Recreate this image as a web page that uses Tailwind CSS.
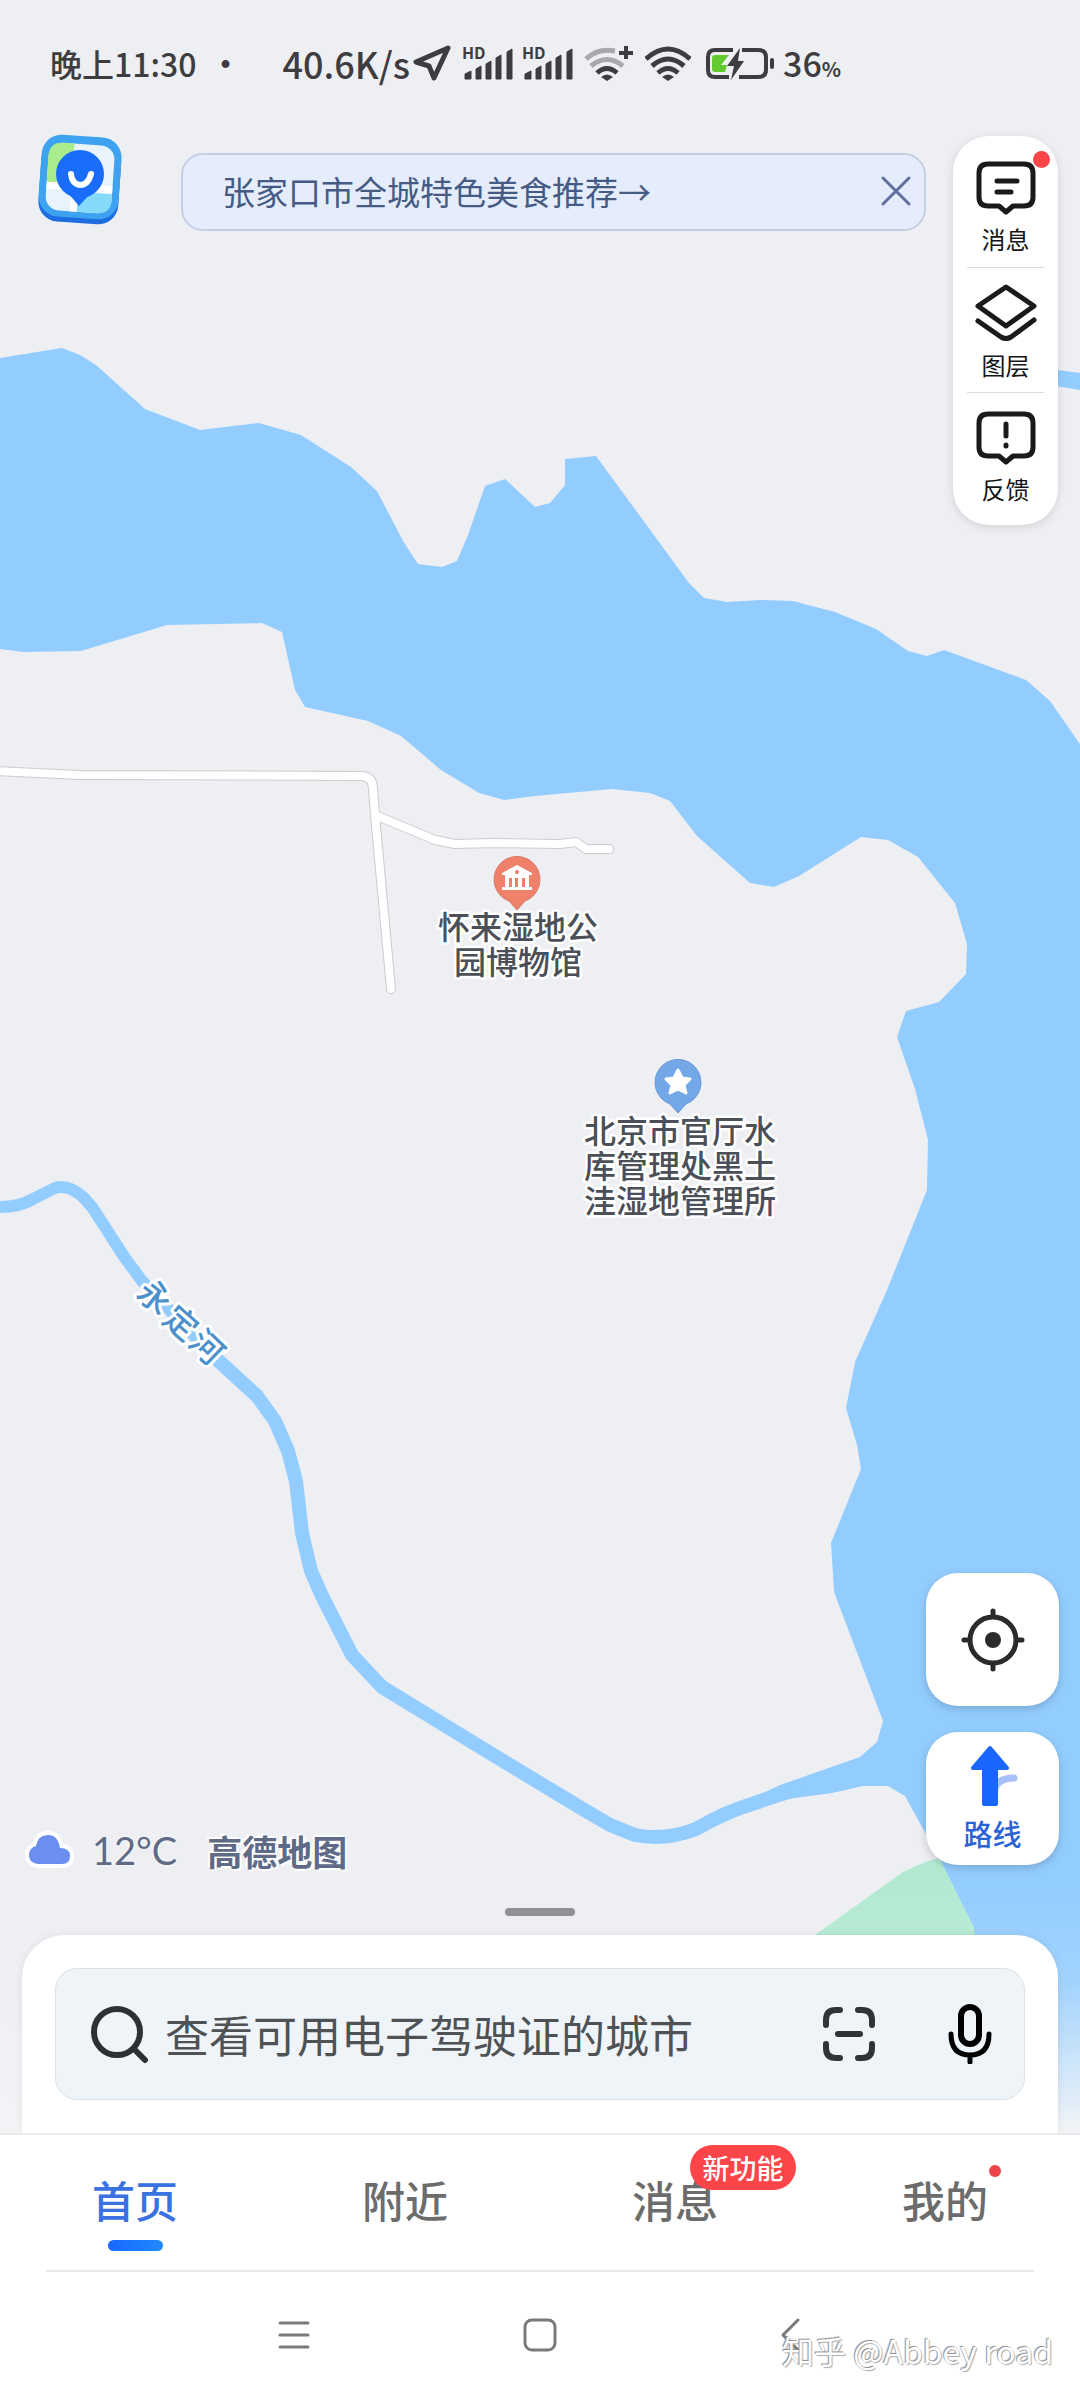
<!DOCTYPE html>
<html lang="zh-CN">
<head>
  <meta charset="UTF-8">
  <meta name="viewport" content="width=device-width, initial-scale=1.0">
  <title>高德地图</title>
  <script src="https://cdn.jsdelivr.net/npm/@tailwindcss/browser@4"></script>
</head>
<body class="flex min-h-screen flex-col bg-white font-['Noto_Sans_CJK_SC',sans-serif]">
  <main class="relative flex flex-1 flex-col overflow-hidden bg-[#eeeff3]">

    <!-- Map canvas -->
    <svg class="absolute inset-0 h-full w-full" viewBox="0 0 1080 2133" preserveAspectRatio="xMidYMin slice" role="img" aria-label="地图">
      <defs>
        <linearGradient id="fade" x1="0" y1="0" x2="0" y2="1">
          <stop offset="0" stop-color="#f3f4f6" stop-opacity="0"></stop>
          <stop offset="0.4" stop-color="#f3f4f6" stop-opacity="0.15"></stop>
          <stop offset="1" stop-color="#f3f4f6"></stop>
        </linearGradient>
      </defs>

      <!-- Reservoir -->
      <path fill="#93cdff" d="M0 358L62 348L80 355L96 365L145 409L200 430L259 423L301 435L351 467L377 491L403 541L418 564L442 567L457 561L468 535L485 486L505 479L535 507L550 503L565 485V459L596 456L689 583L704 598L727 602L760 600L793 601L835 612L876 629L908 651L927 656L944 650L1026 680L1050 701L1080 744V2133H980L974 1928L939 1858L905 1796L888 1786H863L832 1793L780 1800L750 1809V1799L780 1785L860 1757L877 1742L883 1721L834 1592L831 1543L861 1469L857 1445L846 1408L855 1362L887 1290L927 1190L928 1140L915 1089L897 1037L906 1011L939 1002L966 974L967 944L955 903L918 857L888 840L861 837L799 876L774 887L750 883L697 836L670 801L650 793L612 789L535 796L504 800L479 793L441 770L401 736L368 721L305 707L295 690L282 632L262 623L167 625L81 651L24 652L0 649Z"></path>
      <path fill="#93cdff" d="M1050 369L1080 373V390L1050 385Z"></path>
      <path fill="#b2ead1" d="M815 1935L903 1872L925 1862L939 1858L970 1920L974 1928V1940H815Z"></path>

      <!-- River -->
      <path fill="none" stroke="#93cdff" stroke-width="12" stroke-linejoin="round" d="M-5 1207Q18 1208 33 1199L55 1188Q68 1184 83 1197L92 1207L125 1258L142 1281L217 1360"></path>
      <path fill="none" stroke="#93cdff" stroke-width="14" stroke-linejoin="round" stroke-linecap="round" d="M210 1353L257 1396L275 1421L288 1451L296 1481L302 1533L311 1571L322 1596L352 1655L382 1687L490 1753L581 1808L610 1825L635 1835Q665 1841 696 1829Q725 1812 755 1803L800 1788"></path>

      <!-- Roads -->
      <g fill="none" stroke-linecap="round" stroke-linejoin="round">
        <g stroke="#cbccd0" stroke-width="10">
          <path d="M-8 771L80 775L362 776Q373 777 373 789L375 815L391 989"></path>
          <path d="M375 815L435 840L455 844L495 843L560 844L576 842L586 849H609"></path>
        </g>
        <g stroke="#ffffff" stroke-width="8">
          <path d="M-8 771L80 775L362 776Q373 777 373 789L375 815L391 989"></path>
          <path d="M375 815L435 840L455 844L495 843L560 844L576 842L586 849H609"></path>
        </g>
      </g>

      <!-- Museum marker -->
      <path fill="#ef8069" stroke="#d97a68" stroke-width="1" d="M517 910L509 901A23 23 0 1 1 525 901Z"></path>
      <path fill="#ffffff" d="M517 865L532 873V875H529V887H532V890H502V887H505V875H502V873Z"></path>
      <g fill="#ef8069">
        <circle cx="517" cy="872" r="2"></circle>
        <path d="M509 878h3v9h-3zM515 878h3v9h-3zM522 878h3v9h-3z"></path>
      </g>

      <!-- Office marker -->
      <path fill="#74a7e8" stroke="#6a99d6" stroke-width="1" d="M678 1113L670 1104A23 23 0 1 1 686 1104Z"></path>
      <path fill="#ffffff" stroke="#ffffff" stroke-width="3" stroke-linejoin="round" d="M678 1070L682 1078L690 1079L684 1085L686 1093L678 1089L670 1093L672 1085L666 1079L674 1078Z"></path>

      <g class="text-[32px] font-medium" fill="#4b4f57" stroke="#ffffff" stroke-width="5" stroke-linejoin="round" paint-order="stroke" text-anchor="middle">
        <text x="518" y="939">怀来湿地公</text>
        <text x="518" y="974">园博物馆</text>
        <text x="680" y="1143">北京市官厅水</text>
        <text x="680" y="1178">库管理处黑土</text>
        <text x="680" y="1213">洼湿地管理所</text>
      </g>
      <g class="text-[33px] font-medium" fill="#4b8fcb" stroke="#ffffff" stroke-width="6" stroke-linejoin="round" paint-order="stroke" text-anchor="middle">
        <text transform="translate(155 1297) rotate(38)" y="12">永</text>
        <text transform="translate(181 1323) rotate(41)" y="12">定</text>
        <text transform="translate(207 1347) rotate(44)" y="12">河</text>
      </g>

      <rect x="0" y="1880" width="1080" height="253" fill="url(#fade)"></rect>
    </svg>

    <!-- Status bar -->
    <header class="relative flex h-[130px] items-center pb-1 pl-[50px] text-[34px] leading-none font-medium text-[#3d3d3f]">
      <span class="text-[32px]">晚上11:30</span>
      <span class="w-[86px] pl-3">·</span>
      <span class="text-[36px]">40.6K/s</span>
      <svg class="ml-[2px] h-9 w-10" viewBox="0 0 40 36" fill="none" stroke="currentColor" stroke-width="5" stroke-linejoin="round" aria-hidden="true">
        <path d="M36 3L4 17L17 21L22 33Z"></path>
      </svg>
      <svg class="ml-[10px] h-9 w-[54px] overflow-visible" viewBox="0 0 54 36" fill="currentColor" aria-label="HD 信号">
        <text x="0" y="14" class="text-[16px] font-bold">HD</text>
        <path d="M3 34v-5l6-3v8zM14 34V24l5-3v13zM24 34V19l5-3v18zM34 34V13l5-3v24zM45 34V7l5-3v30z" stroke="currentColor" stroke-linejoin="round"></path>
      </svg>
      <svg class="ml-[6px] h-9 w-[54px] overflow-visible" viewBox="0 0 54 36" fill="currentColor" aria-label="HD 信号">
        <text x="0" y="14" class="text-[16px] font-bold">HD</text>
        <path d="M3 34v-5l6-3v8zM14 34V24l5-3v13zM24 34V19l5-3v18zM34 34V13l5-3v24zM45 34V7l5-3v30z" stroke="currentColor" stroke-linejoin="round"></path>
      </svg>
      <svg class="ml-2 h-9 w-[50px]" viewBox="0 0 50 36" fill="none" stroke="currentColor" stroke-width="5" aria-hidden="true">
        <path stroke="#a9a9ad" d="M2 14Q14 3 31 6M7 21Q23 8 39 21"></path>
        <path d="M13 28Q23 19 33 28"></path>
        <path stroke-width="4" d="M42 1v13M35 8h14"></path>
        <path fill="currentColor" stroke="none" d="M17 32Q23 27 29 32L23 36Z"></path>
      </svg>
      <svg class="ml-[11px] h-9 w-[46px]" viewBox="0 0 46 36" fill="none" stroke="currentColor" stroke-width="5" aria-hidden="true">
        <path d="M1 14Q23 -6 45 14M7 21Q23 7 39 21M13 28Q23 19 33 28"></path>
        <path fill="currentColor" stroke="none" d="M17 32Q23 27 29 32L23 36Z"></path>
      </svg>
      <svg class="ml-[14px] h-9 w-[70px]" viewBox="0 0 70 36" fill="none" aria-hidden="true">
        <path stroke="currentColor" stroke-width="4" d="M28 5H10Q3 5 3 12V25Q3 32 10 32H24M37 5H53Q61 5 61 12V25Q61 32 53 32H34"></path>
        <path fill="#62c92e" d="M10 10H24L16 20H22L20 27H10Q7 27 7 24V13Q7 10 10 10Z"></path>
        <path fill="currentColor" d="M35 3L22 21H29L26 35L39 16H33Z"></path>
        <rect x="65" y="13" width="4" height="11" rx="2" fill="currentColor"></rect>
      </svg>
      <span class="ml-2 flex items-baseline">36<span class="text-[20px] font-bold">%</span></span>
    </header>

    <!-- Promo banner and side tools -->
    <section class="relative flex items-start pr-[22px] pl-9">
      <a href="#" aria-label="高德地图" class="mt-[3px] shrink-0">
        <svg class="h-24 w-[90px]" viewBox="0 0 90 96" aria-hidden="true">
          <g transform="rotate(4 44 46)">
            <rect x="4" y="8" width="80" height="82" rx="20" fill="#1d6de0"></rect>
            <rect x="4" y="3" width="80" height="82" rx="20" fill="#3da2f0"></rect>
            <rect x="11" y="11" width="66" height="68" rx="14" fill="#e9f3fb"></rect>
            <path fill="#a8ec8b" d="M11 52V25Q11 11 25 11H36V20L20 52Z"></path>
            <path fill="#ffffff" d="M11 51H77V58H11ZM36 57H43V79H36Z"></path>
            <path fill="#84daf8" d="M43 59H77V65Q77 79 63 79H43Z"></path>
          </g>
          <circle cx="44" cy="41" r="24" fill="#1a6cfb"></circle>
          <path fill="#1a6cfb" d="M32 60L43 73L54 61Z"></path>
          <path fill="none" stroke="#ffffff" stroke-width="6" stroke-linecap="round" d="M35 41Q36 51 44 52Q52 52 55 41"></path>
        </svg>
      </a>
      <div class="mt-[23px] ml-[55px] flex h-[78px] flex-1 items-center rounded-[22px] border-2 border-[#c3cfe3] bg-[#e5edfc] pr-[6px] pb-[2px] pl-[39px]">
        <a href="#" class="flex-1 text-[33px] leading-none text-[#465b84]">张家口市全城特色美食推荐→</a>
        <button type="button" aria-label="关闭" class="flex size-11 items-center justify-center">
          <svg class="size-8" viewBox="0 0 32 32" fill="none" stroke="#5e6f9c" stroke-width="3" stroke-linecap="round"><path d="M3 3L29 29M29 3L3 29"></path></svg>
        </button>
      </div>
      <nav aria-label="工具" class="mt-[6px] ml-[27px] w-[105px] shrink-0 rounded-[36px] bg-white px-[14px] py-[7px] text-[24px] leading-none text-[#151515] shadow-[0_2px_10px_rgba(0,0,0,0.12)]">
        <button type="button" class="relative flex h-[125px] w-full flex-col items-center justify-center gap-[11px] border-b border-[#dcdcde]">
          <svg class="h-[56px] w-[62px] shrink-0" viewBox="0 0 62 56" fill="none" stroke="#1a1a1a" stroke-width="5" stroke-linejoin="round" stroke-linecap="round" aria-hidden="true">
            <path d="M13 4H49Q58 4 58 13V37Q58 46 49 46H38L31 52L24 46H13Q4 46 4 37V13Q4 4 13 4Z"></path>
            <path d="M22 21H42M22 32H36"></path>
          </svg>
          消息
          <span class="absolute top-2 -right-[6px] size-[17px] rounded-full bg-[#fb4549]"></span>
        </button>
        <button type="button" class="flex h-[125px] w-full flex-col items-center justify-center gap-[11px] border-b border-[#dcdcde]">
          <svg class="h-[58px] w-[62px] shrink-0" viewBox="0 0 62 58" fill="none" stroke="#1a1a1a" stroke-width="5" stroke-linejoin="round" stroke-linecap="round" aria-hidden="true">
            <path d="M31 3L59 22L31 42L3 22ZM3 37L26 53Q31 56 36 53L59 36"></path>
          </svg>
          图层
        </button>
        <button type="button" class="flex h-[125px] w-full flex-col items-center justify-center gap-[11px]">
          <svg class="h-[56px] w-[62px] shrink-0" viewBox="0 0 62 56" fill="none" stroke="#1a1a1a" stroke-width="5" stroke-linejoin="round" stroke-linecap="round" aria-hidden="true">
            <path d="M13 4H49Q58 4 58 13V37Q58 46 49 46H38L31 52L24 46H13Q4 46 4 37V13Q4 4 13 4Z"></path>
            <path d="M31 14V26M31 35V36"></path>
          </svg>
          反馈
        </button>
      </nav>
    </section>

    <!-- Weather and map actions -->
    <section class="relative mt-auto flex items-end justify-between pr-[21px] pl-6">
      <div class="flex h-[30px] items-center text-[#5f6b86]">
        <svg class="h-11 w-[52px]" viewBox="0 0 52 44" aria-hidden="true">
          <path fill="#6a8ff0" stroke="#ffffff" stroke-width="8" stroke-linejoin="round" paint-order="stroke" d="M14 36Q5 35 5 27Q5 20 12 18Q14 7 24 7Q34 7 36 20Q46 20 46 28Q46 36 38 36Z"></path>
        </svg>
        <span class="ml-4 font-[Lato] text-[38px] leading-none [text-shadow:0_0_3px_#fff]">12°C</span>
        <span class="ml-[30px] text-[35px] leading-none font-bold [text-shadow:0_0_2px_#fff,2px_2px_1px_#fff,-2px_-2px_1px_#fff]">高德地图</span>
      </div>
      <div class="flex flex-col gap-[26px]">
        <button type="button" aria-label="定位" class="flex size-[133px] items-center justify-center rounded-[32px] bg-white shadow-[0_3px_8px_rgba(0,0,0,0.18)]">
          <svg class="size-16" viewBox="0 0 64 64" fill="none" stroke="#2b2b2b" stroke-width="5" stroke-linecap="round">
            <circle cx="32" cy="32" r="23"></circle>
            <path d="M32 3V8M32 56V61M3 32H8M56 32H61"></path>
            <circle cx="32" cy="32" r="8" fill="#2b2b2b" stroke="none"></circle>
          </svg>
        </button>
        <button type="button" class="flex size-[133px] flex-col items-center justify-center gap-3 rounded-[32px] bg-white pb-1 text-[29px] leading-none font-medium text-[#2a62d8] shadow-[0_3px_8px_rgba(0,0,0,0.18)]">
          <svg class="h-[62px] w-[50px]" viewBox="0 0 50 62" fill="none" aria-hidden="true">
            <path stroke="#a9bffb" stroke-width="7" stroke-linecap="round" d="M26 50Q26 33 46 33"></path>
            <path fill="#1a66ff" stroke="#1a66ff" stroke-width="4" stroke-linejoin="round" d="M22 3L39 23H28V59H16V23H5Z"></path>
          </svg>
          路线
        </button>
      </div>
    </section>

    <div class="relative mx-auto mt-[43px] mb-[19px] h-2 w-[70px] rounded-full bg-[#8f9196]"></div>

    <!-- Search sheet -->
    <section class="relative mx-[22px] rounded-t-[42px] bg-white p-[33px] shadow-[0_0_8px_rgba(0,0,0,0.08)]">
      <form class="flex h-[132px] items-center rounded-[22px] border border-[#dde1e6] bg-[#eff4f8] pr-[30px] pl-[33px]">
        <label for="search" class="shrink-0" aria-label="搜索">
          <svg class="h-[60px] w-[62px]" viewBox="0 0 62 60" fill="none" stroke="#2e3133" stroke-width="6" stroke-linecap="round"><circle cx="28" cy="28" r="23"></circle><path d="M45 45L56 56"></path></svg>
        </label>
        <input id="search" type="text" placeholder="查看可用电子驾驶证的城市" class="ml-[14px] h-16 min-w-0 flex-1 bg-transparent text-[44px] leading-none outline-none placeholder:text-[#4e5254]">
        <button type="button" aria-label="扫一扫" class="shrink-0">
          <svg class="h-14 w-[54px]" viewBox="0 0 54 56" fill="none" stroke="#303436" stroke-width="6" stroke-linecap="round"><path d="M4 19V14Q4 4 14 4H18M36 4H40Q50 4 50 14V19M4 38V42Q4 52 14 52H18M36 52H40Q50 52 50 42V38M16 28H38"></path></svg>
        </button>
        <button type="button" aria-label="语音搜索" class="ml-[70px] shrink-0">
          <svg class="h-[60px] w-12" viewBox="0 0 48 60" fill="none" stroke="#000000" stroke-width="6" stroke-linecap="round"><rect x="15" y="3" width="18" height="37" rx="9"></rect><path stroke-width="5" d="M5 30Q5 51 24 51Q43 51 43 30M24 52V58"></path></svg>
        </button>
      </form>
    </section>
  </main>

  <!-- Tabs -->
  <nav aria-label="主导航" class="grid h-[137px] grid-cols-4 border-t-2 border-[#e9eaec] text-[43px] leading-none font-medium text-[#6c6c6c]">
    <a href="#" aria-current="page" class="flex flex-col items-center pt-[43px] text-[#3a72e2]">首页<span class="mt-[19px] h-[11px] w-[55px] rounded-full bg-linear-to-r from-[#1a67ff] to-[#2089fb]"></span></a>
    <a href="#" class="flex flex-col items-center pt-[43px]">附近</a>
    <a href="#" class="flex flex-col items-center pt-[43px]">
      <span class="relative">消息<span class="absolute -top-[33px] left-[58px] flex h-[45px] w-[106px] items-center justify-center rounded-full bg-[#fb4549] text-[27px] whitespace-nowrap text-white">新功能</span></span>
    </a>
    <a href="#" class="flex flex-col items-center pt-[43px]">
      <span class="relative">我的<span class="absolute -top-[13px] -right-[13px] size-3 rounded-full bg-[#f0444b]"></span></span>
    </a>
  </nav>

  <!-- System navigation -->
  <footer class="relative mx-[46px] flex h-[130px] items-center justify-center gap-[210px] border-t-2 border-[#e8e8ea] pb-[2px] text-[#7a7a7a]">
    <button type="button" aria-label="最近任务"><svg class="size-9" viewBox="0 0 36 36" fill="none" stroke="currentColor" stroke-width="3" stroke-linecap="round"><path d="M4 6H32M4 18H32M4 30H32"></path></svg></button>
    <button type="button" aria-label="主屏幕"><svg class="size-9" viewBox="0 0 36 36" fill="none" stroke="currentColor" stroke-width="3"><rect x="3" y="3" width="30" height="30" rx="7"></rect></svg></button>
    <button type="button" aria-label="返回"><svg class="size-9" viewBox="0 0 36 36" fill="none" stroke="currentColor" stroke-width="3" stroke-linecap="round" stroke-linejoin="round"><path d="M30 3L15 18L30 33"></path></svg></button>
    <span class="absolute right-[-19px] bottom-[34px] text-[32px] leading-none whitespace-nowrap text-white [text-shadow:-1px_-1px_1px_#8c8c8c,1px_1px_1px_#aaa]">知乎 @Abbey road</span>
  </footer>
</body>
</html>
